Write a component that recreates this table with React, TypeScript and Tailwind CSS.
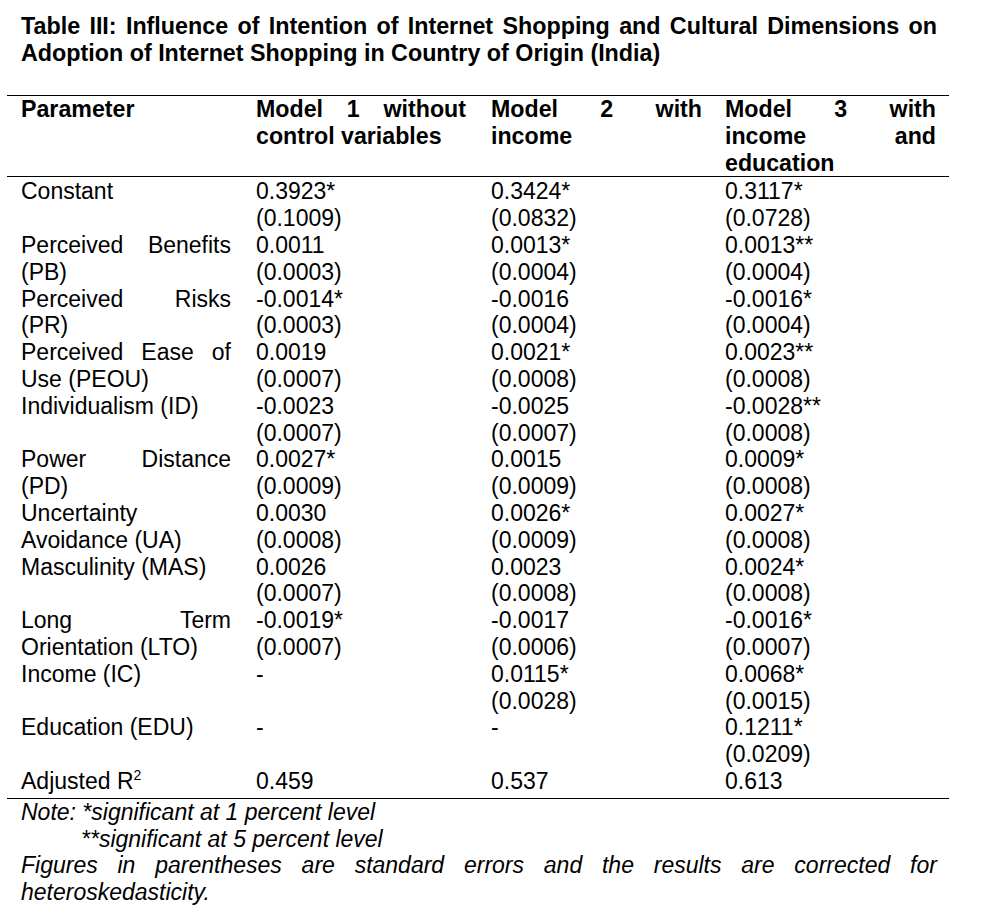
import React from "react";

type Line = string | string[];

function L({ line, className = "" }: { line: Line; className?: string }) {
  if (Array.isArray(line)) {
    return (
      <div className={"flex justify-between whitespace-nowrap " + className}>
        {line.map((w, i) => (
          <span key={i}>{w}</span>
        ))}
      </div>
    );
  }
  return <div className={"whitespace-nowrap " + className}>{line === "" ? "\u00a0" : line}</div>;
}

const pad = ["pl-[14px] pr-[14px]", "pl-[11px] pr-[14px]", "pl-[11px] pr-[11px]", "pl-[12px] pr-[13px]"];

const header: Line[][] = [
  ["Parameter"],
  [["Model", "1", "without"], "control variables"],
  [["Model", "2", "with"], "income"],
  [["Model", "3", "with"], ["income", "and"], "education"],
];

const rows: Line[][][] = [
  [["Constant"], ["0.3923*", "(0.1009)"], ["0.3424*", "(0.0832)"], ["0.3117*", "(0.0728)"]],
  [[["Perceived", "Benefits"], "(PB)"], ["0.0011", "(0.0003)"], ["0.0013*", "(0.0004)"], ["0.0013**", "(0.0004)"]],
  [[["Perceived", "Risks"], "(PR)"], ["-0.0014*", "(0.0003)"], ["-0.0016", "(0.0004)"], ["-0.0016*", "(0.0004)"]],
  [[["Perceived", "Ease", "of"], "Use (PEOU)"], ["0.0019", "(0.0007)"], ["0.0021*", "(0.0008)"], ["0.0023**", "(0.0008)"]],
  [["Individualism (ID)"], ["-0.0023", "(0.0007)"], ["-0.0025", "(0.0007)"], ["-0.0028**", "(0.0008)"]],
  [[["Power", "Distance"], "(PD)"], ["0.0027*", "(0.0009)"], ["0.0015", "(0.0009)"], ["0.0009*", "(0.0008)"]],
  [["Uncertainty", "Avoidance (UA)"], ["0.0030", "(0.0008)"], ["0.0026*", "(0.0009)"], ["0.0027*", "(0.0008)"]],
  [["Masculinity (MAS)"], ["0.0026", "(0.0007)"], ["0.0023", "(0.0008)"], ["0.0024*", "(0.0008)"]],
  [[["Long", "Term"], "Orientation (LTO)"], ["-0.0019*", "(0.0007)"], ["-0.0017", "(0.0006)"], ["-0.0016*", "(0.0007)"]],
  [["Income (IC)"], ["-"], ["0.0115*", "(0.0028)"], ["0.0068*", "(0.0015)"]],
  [["Education (EDU)"], ["-"], ["-"], ["0.1211*", "(0.0209)"]],
];

export default function App() {
  return (
    <div className="w-[989px] h-[918px] bg-white text-black font-['Liberation_Sans',Arial,sans-serif] text-[23px] leading-[26.8px] pt-[13px] overflow-hidden">
      <div className="ml-[21px] w-[916px] font-bold text-[23.3px] leading-[27px]">
        <L
          line={[
            "Table",
            "III:",
            "Influence",
            "of",
            "Intention",
            "of",
            "Internet",
            "Shopping",
            "and",
            "Cultural",
            "Dimensions",
            "on",
          ]}
        />
        <L line="Adoption of Internet Shopping in Country of Origin (India)" />
      </div>

      <div className="ml-[7px] w-[942px] mt-[28px] border-t border-b border-black">
        <div className="grid grid-cols-[238px_235px_233px_236px] border-b border-black font-bold text-[23.2px]">
          {header.map((cell, ci) => (
            <div key={ci} className={pad[ci]}>
              {cell.map((ln, li) => (
                <L key={li} line={ln} />
              ))}
            </div>
          ))}
        </div>
        <div className="grid grid-cols-[238px_235px_233px_236px] pt-[1px]">
          {rows.map((row, ri) =>
            row.map((cell, ci) => (
              <div key={ri + "-" + ci} className={pad[ci]}>
                {cell.map((ln, li) => (
                  <L key={li} line={ln} />
                ))}
              </div>
            ))
          )}
          <div className={pad[0]}>
            <div className="whitespace-nowrap">
              Adjusted R<span className="relative -top-[9px] text-[14px]">2</span>
            </div>
          </div>
          <div className={pad[1]}>0.459</div>
          <div className={pad[2]}>0.537</div>
          <div className={pad[3]}>0.613</div>
        </div>
      </div>

      <div className="ml-[21px] w-[916px] italic">
        <L line="Note: *significant at 1 percent level" />
        <L line="**significant at 5 percent level" className="pl-[60px]" />
        <L
          line={[
            "Figures",
            "in",
            "parentheses",
            "are",
            "standard",
            "errors",
            "and",
            "the",
            "results",
            "are",
            "corrected",
            "for",
          ]}
        />
        <L line="heteroskedasticity." />
      </div>
    </div>
  );
}
